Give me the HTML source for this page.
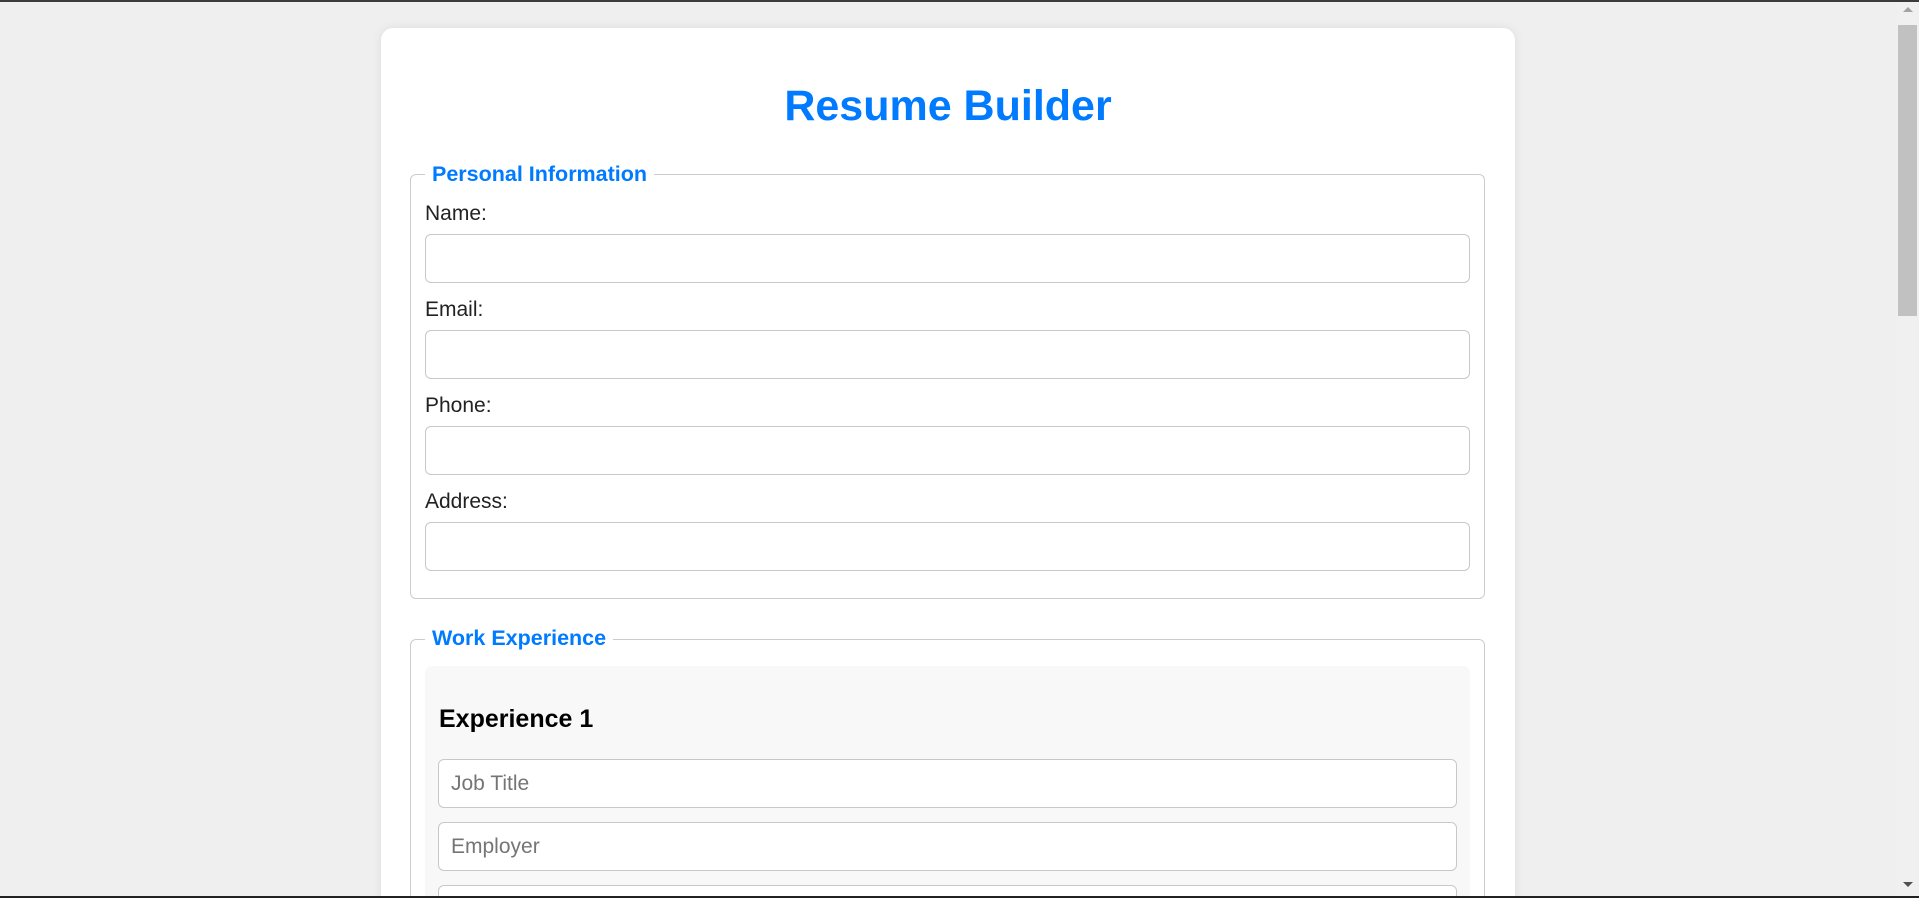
<!DOCTYPE html>
<html><head><meta charset="utf-8"><style>
html,body{margin:0;padding:0;width:1919px;height:898px;overflow:hidden;background:#efefef;font-family:"Liberation Sans",Arial,sans-serif;}
#wrap{position:relative;width:1919px;height:898px;overflow:hidden;}
.topline{position:absolute;left:0;top:0;width:1919px;height:2px;background:#3a3a3f;}
.botline{position:absolute;left:0;top:896px;width:1919px;height:2px;background:#222;}
.card{position:absolute;left:381px;top:28px;width:1134px;height:900px;background:#fff;border-radius:12px;box-shadow:0 0 10px rgba(0,0,0,0.08);}
h1{position:absolute;left:381px;width:1134px;top:82px;margin:0;text-align:center;color:#007bff;font-size:43px;font-weight:bold;}
.fs{position:absolute;border:1px solid #ccc;border-radius:6px;box-sizing:border-box;}
.lg{position:absolute;background:#fff;color:#007bff;font-weight:bold;font-size:21.5px;padding:0 7px;line-height:24px;}
.lb{position:absolute;left:425px;font-size:21px;color:#222;line-height:24px;}
.in{position:absolute;left:425px;width:1045px;height:49px;border:1px solid #c8c8c8;border-radius:6px;box-sizing:border-box;background:#fff;}
.in2{position:absolute;left:438px;width:1019px;height:49px;border:1px solid #c8c8c8;border-radius:6px;box-sizing:border-box;background:#fff;color:#757575;font-size:21px;line-height:47px;padding-left:12px;}
.exp{position:absolute;left:425px;top:666px;width:1045px;height:240px;background:#f8f8f8;border-radius:7px;}
.sb{position:absolute;left:1897px;top:2px;width:22px;height:894px;background:#f0f0f0;}
.th{position:absolute;left:1898px;top:25px;width:19px;height:291px;background:#c1c1c1;}
</style></head><body><div id="wrap">
<div class="topline"></div>
<div class="card"></div>
<h1>Resume Builder</h1>
<div class="fs" style="left:410px;top:174px;width:1075px;height:425px;"></div>
<div class="lg" style="left:425px;top:162px;">Personal Information</div>
<div class="lb" style="top:202px;">Name:</div>
<div class="in" style="top:234px;"></div>
<div class="lb" style="top:298px;">Email:</div>
<div class="in" style="top:330px;"></div>
<div class="lb" style="top:394px;">Phone:</div>
<div class="in" style="top:426px;"></div>
<div class="lb" style="top:490px;">Address:</div>
<div class="in" style="top:522px;"></div>
<div class="fs" style="left:410px;top:639px;width:1075px;height:300px;"></div>
<div class="lg" style="left:425px;top:626px;">Work Experience</div>
<div class="exp"></div>
<div style="position:absolute;left:439px;top:705px;font-size:25px;font-weight:bold;color:#000;">Experience 1</div>
<div class="in2" style="top:759px;">Job Title</div>
<div class="in2" style="top:822px;">Employer</div>
<div class="in2" style="top:885px;"></div>
<div class="sb"></div>
<div class="th"></div>
<div style="position:absolute;left:1903px;top:7px;width:0;height:0;border-left:5px solid transparent;border-right:5px solid transparent;border-bottom:5px solid #a3a3a3;"></div>
<div style="position:absolute;left:1903px;top:882px;width:0;height:0;border-left:5px solid transparent;border-right:5px solid transparent;border-top:5px solid #505050;"></div>
<div class="botline"></div>
</div></body></html>
